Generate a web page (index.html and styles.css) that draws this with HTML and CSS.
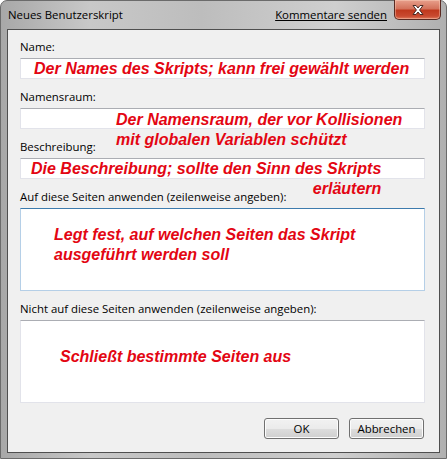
FILE: index.html
```html
<!DOCTYPE html>
<html lang="de">
<head>
    <meta charset="UTF-8">
    <title>Neues Benutzerskript</title>
    <link rel="stylesheet" href="styles.css">
</head>
<body>
    <div class="window">
        <div class="titlebar">
            <span class="title">Neues Benutzerskript</span>
            <a class="feedback" href="#">Kommentare senden</a>
            <div class="close-btn">
                <svg width="18" height="12" viewBox="0 0 18 12">
                    <path d="M4 1.5 L7 1.5 L9 4 L11 1.5 L14 1.5 L10.6 6 L14 10.5 L11 10.5 L9 8 L7 10.5 L4 10.5 L7.4 6 Z"
                          fill="#fff" stroke="#4a2a24" stroke-width="1" stroke-linejoin="round"/>
                </svg>
            </div>
        </div>

        <div class="client">
            <form class="script-form">
                <label class="field-label">Name:</label>
                <input class="field" type="text">

                <label class="field-label">Namensraum:</label>
                <input class="field" type="text">

                <label class="field-label">Beschreibung:</label>
                <input class="field" type="text">

                <label class="field-label">Auf diese Seiten anwenden (zeilenweise angeben):</label>
                <textarea class="field area focused"></textarea>

                <label class="field-label">Nicht auf diese Seiten anwenden (zeilenweise angeben):</label>
                <textarea class="field area"></textarea>

                <div class="buttons">
                    <button type="button" class="btn">OK</button>
                    <button type="button" class="btn">Abbrechen</button>
                </div>
            </form>
        </div>

        <!-- Erklärungen zu den einzelnen Feldern -->
        <div class="note note-name">Der Names des Skripts; kann frei gewählt werden</div>
        <div class="note note-ns">Der Namensraum, der vor Kollisionen<br>mit globalen Variablen schützt</div>
        <div class="note note-desc">Die Beschreibung; sollte den Sinn des Skripts<br>erläutern</div>
        <div class="note note-incl">Legt fest, auf welchen Seiten das Skript<br>ausgeführt werden soll</div>
        <div class="note note-excl">Schließt bestimmte Seiten aus</div>
    </div>
</body>
</html>
```

FILE: styles.css
```css
body {
    margin: 0;
    font-family: "Open Sans", "DejaVu Sans", sans-serif;
    font-size: 11.4px;
    color: #000;
}

.window {
    position: relative;
    width: 447px;
    height: 459px;
    box-sizing: border-box;
    border: 1px solid #6b6b6b;
    border-radius: 7px 7px 0 0;
    background: linear-gradient(to right, #a8a8a8 0%, #c8c8c8 20%, #bdbdbd 45%, #cfcfcf 75%, #b0b0b0 100%);
    padding: 0 6px 6px 6px;
}

.titlebar {
    height: 28px;
    display: flex;
    align-items: center;
    position: relative;
}

.title {
    padding-left: 1px;
    margin-top: -1px;
}

.feedback {
    margin-left: auto;
    margin-right: 53px;
    color: #000;
    text-decoration: underline;
    margin-top: -1px;
}

.close-btn {
    position: absolute;
    right: -1px;
    top: -1px;
    width: 45px;
    height: 19px;
    border: 1px solid #5a2a22;
    border-top: none;
    border-radius: 0 0 5px 5px;
    background: linear-gradient(to bottom, #e8a08c 0%, #d4735c 45%, #c0391e 55%, #c94a30 85%, #e07a5c 100%);
    display: flex;
    align-items: center;
    justify-content: center;
    box-shadow: inset 0 0 0 1px rgba(255, 220, 200, 0.4);
}

.client {
    height: 424px;
    box-sizing: border-box;
    border: 1px solid #4f4f4f;
    background: #f0f0f0;
}

.script-form {
    display: flex;
    flex-direction: column;
    padding: 9px 14px 0 12px;
}

.field-label {
    display: block;
    line-height: 15px;
    height: 15px;
    margin-bottom: 4px;
}

.field {
    display: block;
    width: 405px;
    height: 21px;
    box-sizing: border-box;
    margin: 0 0 10px 0;
    border: 1px solid #e2e3ea;
    border-top-color: #abadb3;
    background: #fff;
    font: inherit;
    padding: 0;
    outline: none;
    resize: none;
}

.area {
    height: 83px;
    border-color: #e2e3ea;
    border-top-color: #abadb3;
}

.area.focused {
    border-color: #b5cfe7;
    border-top-color: #3d7bad;
}

.buttons {
    display: flex;
    justify-content: flex-end;
    gap: 10px;
    margin-top: 5px;
    padding-right: 1px;
}

.btn {
    width: 75px;
    height: 21px;
    border: 1px solid #707070;
    border-radius: 3px;
    background: linear-gradient(to bottom, #f2f2f2 0%, #ebebeb 50%, #dddddd 51%, #cfcfcf 100%);
    box-shadow: inset 0 0 0 1px #fcfcfc;
    font: inherit;
    color: #000;
    padding: 0;
}

.note {
    position: absolute;
    font-family: "Liberation Sans", Arial, sans-serif;
    font-weight: bold;
    font-style: italic;
    font-size: 16px;
    line-height: 20px;
    color: #e30613;
    white-space: nowrap;
}

.note-name {
    left: 33px;
    top: 58px;
}

.note-ns {
    left: 115px;
    top: 109px;
}

.note-desc {
    left: 30px;
    top: 158px;
    text-align: right;
}

.note-incl {
    left: 53px;
    top: 224px;
}

.note-excl {
    left: 59px;
    top: 346px;
}
```
